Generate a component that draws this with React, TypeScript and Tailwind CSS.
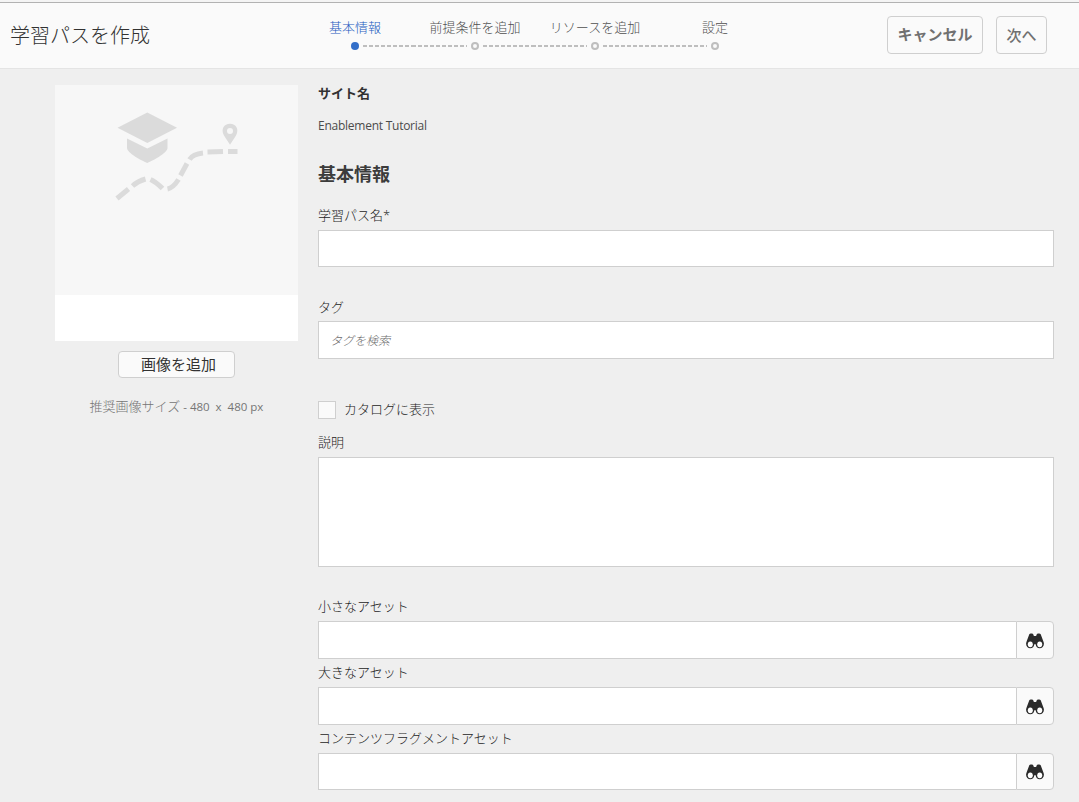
import React from "react";

const steps = [
  { label: "基本情報", active: true },
  { label: "前提条件を追加", active: false },
  { label: "リソースを追加", active: false },
  { label: "設定", active: false },
];

function Steps() {
  return (
    <ol className="ml-[145px] mt-[15px] flex">
      {steps.map((step, i) => (
        <li key={step.label} className="flex w-[120px] flex-col items-center">
          <span
            className={
              step.active
                ? "h-[20px] text-[13px] leading-[18px] text-[#1c5bbf]"
                : "h-[20px] text-[13px] leading-[18px] text-[#505050]"
            }
          >
            {step.label}
          </span>
          <svg className="mt-[4px] h-[8px] w-[120px]" viewBox="0 0 120 8">
            {i > 0 && <path d="M3 4H52" stroke="#bebebe" strokeWidth="2" strokeDasharray="4 2" />}
            {i < 3 && <path d="M68 4H120" stroke="#bebebe" strokeWidth="2" strokeDasharray="4 2" />}
            {i > 0 && <path d="M0 4H1" stroke="#bebebe" strokeWidth="2" />}
            {step.active ? (
              <circle cx="60" cy="4" r="4" fill="#326ec8" />
            ) : (
              <circle cx="60" cy="4" r="3" fill="#fafafa" stroke="#bebebe" strokeWidth="2" />
            )}
          </svg>
        </li>
      ))}
    </ol>
  );
}

function Binoculars() {
  return (
    <svg className="h-[16px] w-[18px]" viewBox="0 0 18 16" fill="#2b2b2b">
      <path d="M3.200 1.600C3.600 .4 7 .2 7.300 1.600L7.900 3H10.100L10.700 1.600C11 .2 14.400 .4 14.800 1.600L17.400 8.400C19 12 16.800 15.300 13.700 15.300C11.500 15.300 9.900 13.700 9.700 11.200H8.300C8.100 13.700 6.500 15.300 4.300 15.300C1.200 15.300-1 12 .6 8.400Z" />
      <ellipse cx="4.300" cy="11.300" rx="2.500" ry="2.900" fill="#fff" />
      <ellipse cx="13.700" cy="11.300" rx="2.500" ry="2.900" fill="#fff" />
      <path d="M7.700 3.500L5.600 8M10.300 3.500L12.400 8" stroke="#2b2b2b" strokeWidth="1" />
    </svg>
  );
}

function Artwork() {
  return (
    <svg className="h-[210px] w-[243px] bg-[#f7f7f7]" viewBox="0 0 243 210" fill="#dbdbdb">
      <path d="M62.500 42.700L92.300 27.500L122 42.700L92.300 58Z" />
      <path d="M72 53.500L92.300 63.500L112.500 53.500V63C112.500 68 97 76 92.300 78C87.500 76 72 68 72 63Z" />
      <path
        fillRule="evenodd"
        d="M175 59.800L169 50.500C165.500 44.500 169 38.800 175 38.800S184.500 44.500 181 50.500ZM175 43a3 3 0 1 0 0 6a3 3 0 1 0 0-6Z"
      />
      <g fill="none" stroke="#dbdbdb" strokeWidth="5">
        <path d="M62 113.500L73.500 104" />
        <path d="M77.500 101Q83 96 90.500 94" />
        <path d="M95.500 94.500Q101 97 107.500 103.500" />
        <path d="M112.500 104Q118 103 123.500 94.500" />
        <path d="M125.500 90.500L132 78.500" />
        <path d="M134.500 74.500Q138 69 148 68" />
        <path d="M152.500 67L168 66.500" />
        <path d="M173 66.500H182.500" />
      </g>
    </svg>
  );
}

const label = "h-[20px] text-[13px] leading-[18px] text-[#1c1c1c]";

function AssetField({ name, last = false }: { name: string; last?: boolean }) {
  return (
    <div className="flex h-[66px] flex-col">
      <label className={label}>{name}</label>
      <div className={last ? "mt-[4px] flex h-[37px]" : "mt-[4px] flex h-[38px]"}>
        <input className="min-w-0 flex-1 border border-r-0 border-[#cfcfcf] bg-white px-3 outline-none" />
        <button
          type="button"
          className="flex w-[38px] items-center justify-center rounded-r-[4px] border border-[#cfcfcf] bg-[#fafafa] pt-[1px]"
        >
          <Binoculars />
        </button>
      </div>
    </div>
  );
}

export default function App() {
  return (
    <div className="h-[802px] w-[1079px] overflow-hidden bg-[#efefef] font-['Open_Sans','Noto_Sans_CJK_JP',sans-serif] font-light">
      <div className="h-[3px] border-b border-[#b2b2b2] bg-[#f4f4f4]" />
      <header className="flex h-[66px] border-b border-[#e4e4e4] bg-[#fafafa]">
        <h1 className="ml-[10px] mt-[17px] w-[140px] whitespace-nowrap text-[20px] leading-[32px] text-[#323232]">
          学習パスを作成
        </h1>
        <Steps />
        <div className="ml-auto mr-[32px] mt-[13px] flex gap-[13px] text-[15px] font-bold text-[#707070]">
          <button className="flex h-[38px] w-[96px] items-center justify-center whitespace-nowrap rounded-[4px] border border-[#cfcfcf] pb-[2px]">
            キャンセル
          </button>
          <button className="flex h-[38px] w-[51px] items-center justify-center whitespace-nowrap rounded-[4px] border border-[#cfcfcf] font-medium">
            次へ
          </button>
        </div>
      </header>
      <main className="flex pl-[55px] pt-[16px]">
        <aside className="flex w-[243px] flex-col items-center">
          <div className="h-[256px] w-[243px] bg-white">
            <Artwork />
          </div>
          <button className="mt-[10px] flex h-[27px] w-[117px] items-center justify-center rounded-[4px] border border-[#cfcfcf] bg-[#fafafa] pl-[4px] text-[15px] font-normal text-[#323232]">
            画像を追加
          </button>
          <p className="mt-[18px] whitespace-pre text-[13px] leading-[20px] text-[#757575]">
            推奨画像サイズ
            <span className="text-[11.500px] font-normal"> - 480  x  480 px</span>
          </p>
        </aside>
        <form className="ml-[20px] flex w-[736px] flex-col">
          <h3 className="mt-[-2px] h-[20px] text-[13px] font-bold leading-[20px] text-[#323232]">サイト名</h3>
          <p className="mt-[13px] h-[20px] text-[12px] font-normal leading-[20px] tracking-[-0.250px] text-[#4b4b4b]">
            Enablement Tutorial
          </p>
          <h2 className="mt-[25px] h-[26px] text-[18px] font-bold leading-[26px] text-[#3c3c3c]">基本情報</h2>
          <label className={label + " mt-[19px]"}>学習パス名*</label>
          <input className="mt-[4px] h-[37px] border border-[#cfcfcf] bg-white px-3 outline-none" />
          <label className={label + " mt-[31px]"}>タグ</label>
          <input
            placeholder="タグを検索"
            className="mt-[3px] h-[38px] border border-[#cfcfcf] bg-white px-[11px] text-[12px] italic outline-none placeholder:text-[#6c6c6c]"
          />
          <div className="mt-[41px] flex h-[20px] items-center">
            <span className="h-[18px] w-[18px] border border-[#cfcfcf] bg-[#fafafa]" />
            <label className={label + " ml-[8px]"}>カタログに表示</label>
          </div>
          <label className={label + " mt-[13px]"}>説明</label>
          <textarea className="mt-[4px] h-[110px] resize-none border border-[#cfcfcf] bg-white outline-none" />
          <div className="mt-[30px] flex flex-col">
            <AssetField name="小さなアセット" />
            <AssetField name="大きなアセット" />
            <AssetField name="コンテンツフラグメントアセット" last />
          </div>
        </form>
      </main>
    </div>
  );
}
